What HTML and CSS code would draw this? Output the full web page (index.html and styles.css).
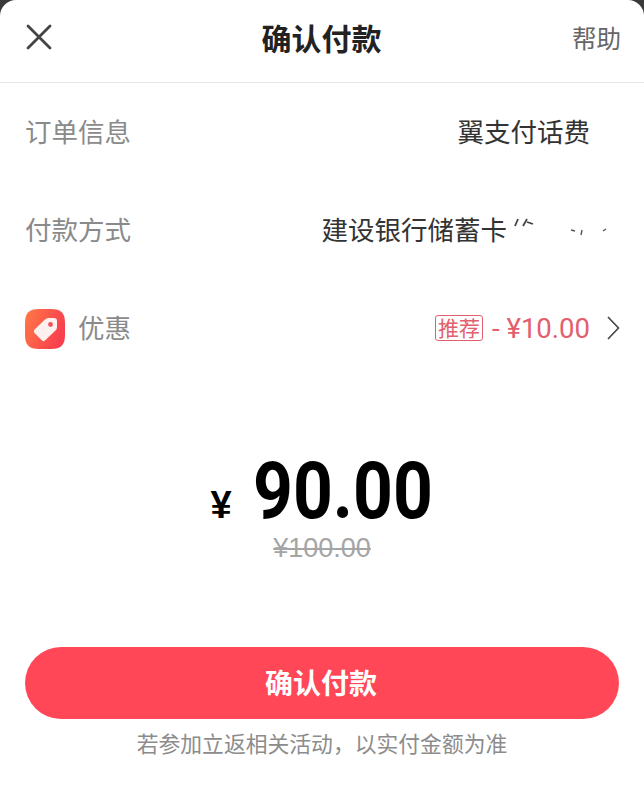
FILE: index.html
```html
<!DOCTYPE html>
<html lang="zh-CN">
<head>
    <meta charset="UTF-8">
    <meta name="viewport" content="width=device-width, initial-scale=1.0">
    <title>确认付款</title>
    <link rel="stylesheet" href="styles.css">
</head>
<body>
    <div class="sheet">
        <header class="topbar">
            <svg class="close-icon" width="26" height="26" viewBox="0 0 26 26">
                <path d="M2 2 L24 24 M24 2 L2 24" stroke="#444" stroke-width="2.8" stroke-linecap="round" fill="none"/>
            </svg>
            <h1 class="title">确认付款</h1>
            <span class="help">帮助</span>
        </header>

        <div class="info-row">
            <span class="label">订单信息</span>
            <span class="value value-order">翼支付话费</span>
        </div>
        <div class="info-row">
            <span class="label">付款方式</span>
            <span class="value value-card">建设银行储蓄卡
                <svg class="card-mask" width="98" height="26" viewBox="0 0 98 26">
                    <path d="M2 10 L5 3 M10 10 L14 3 M14 6 L20 8" stroke="#444" stroke-width="1.8" fill="none"/>
                    <path d="M58 14 L62 15 M69 14 L68 19 M90 15 L93 13" stroke="#555" stroke-width="1.4" fill="none"/>
                </svg>
            </span>
        </div>
        <div class="info-row">
            <div class="discount-left">
                <svg class="tag-icon" width="40" height="40" viewBox="0 0 40 40">
                    <defs>
                        <linearGradient id="tagBg" x1="0" y1="0" x2="1" y2="0.4">
                            <stop offset="0" stop-color="#ff7a45"/>
                            <stop offset="1" stop-color="#f9404f"/>
                        </linearGradient>
                    </defs>
                    <path d="M14 0 H26 C36 0 40 4 40 14 V26 C40 36 36 40 26 40 H14 C4 40 0 36 0 26 V14 C0 4 4 0 14 0 Z" fill="url(#tagBg)"/>
                    <path d="M9.5 20.5 L20 10.5 Q21.5 9 23.5 9 L29 9 Q32 9 32 12 L32 18 Q32 20 30.5 21.5 L20 31.5 Q18.5 33 17 31.5 L9.5 24 Q8 22 9.5 20.5 Z" fill="#fdf0ee"/>
                    <circle cx="25.5" cy="15.5" r="2.4" fill="#f4525a"/>
                </svg>
                <span class="label">优惠</span>
            </div>
            <div class="discount-right">
                <span class="badge">推荐</span>
                <span class="discount-amount">- ¥10.00</span>
                <svg class="chevron" width="14" height="26" viewBox="0 0 14 26">
                    <path d="M2 2 L12.5 13 L2 24" stroke="#444" stroke-width="1.6" fill="none"/>
                </svg>
            </div>
        </div>

        <section class="amount">
            <div class="price">
                <span class="currency">¥</span>
                <span class="number">90.00</span>
            </div>
            <div class="original">¥100.00</div>
        </section>

        <footer class="actions">
            <button class="pay-btn" type="button">确认付款</button>
            <p class="hint">若参加立返相关活动，以实付金额为准</p>
        </footer>
    </div>
</body>
</html>
```

FILE: styles.css
```css
* {
    box-sizing: border-box;
}
body {
    margin: 0;
    background-color: #3a3a3a;
    font-family: "Noto Sans CJK SC", "Liberation Sans", sans-serif;
}
.sheet {
    height: 800px;
    background-color: #fff;
    border-radius: 16px 16px 0 0;
    display: flex;
    flex-direction: column;
    overflow: hidden;
}
.topbar {
    height: 83px;
    padding: 0 23px 8px 26px;
    display: flex;
    justify-content: space-between;
    align-items: center;
    border-bottom: 1px solid #e8e8e8;
}
.close-icon {
    display: block;
}
.title {
    margin: 0 0 0 19px;
    font-size: 30px;
    font-weight: 700;
    color: #222;
}
.help {
    font-size: 24.5px;
    color: #666;
}
.info-row {
    height: 98px;
    padding: 0 24px 0 25px;
    display: flex;
    justify-content: space-between;
    align-items: center;
    flex-shrink: 0;
}
.label {
    font-size: 26.5px;
    line-height: 36px;
    margin-top: -2px;
    color: #8a8a8a;
}
.value {
    font-size: 26.5px;
    line-height: 36px;
    margin-top: -2px;
    color: #333;
    display: flex;
    align-items: center;
}
.value-order {
    margin-right: 30px;
}
.value-card {
    margin-right: 9px;
}
.card-mask {
    margin-left: 6px;
}
.discount-left {
    display: flex;
    align-items: center;
    gap: 13px;
}
.tag-icon {
    display: block;
    margin-top: 2px;
}
.discount-right {
    display: flex;
    align-items: center;
}
.badge {
    width: 48px;
    height: 26px;
    border: 1px solid #e2606e;
    border-radius: 3px;
    color: #e2606e;
    font-size: 21px;
    line-height: 23px;
    text-align: center;
    margin-right: 9px;
}
.discount-amount {
    font-family: "Roboto", "Liberation Sans", sans-serif;
    font-size: 27.5px;
    font-weight: 400;
    color: #e2606e;
    margin-right: 16px;
}
.chevron {
    display: block;
}
.amount {
    margin-top: 86px;
    display: flex;
    flex-direction: column;
    align-items: center;
}
.price {
    display: flex;
    align-items: baseline;
    gap: 21px;
    line-height: 56px;
    color: #000;
}
.currency {
    font-family: "Liberation Sans", sans-serif;
    font-size: 38px;
    font-weight: 700;
}
/* no condensed face installed, so the digits get squeezed to the width they need */
.number {
    font-family: "Roboto", "Liberation Sans", sans-serif;
    font-size: 80px;
    font-weight: 700;
    display: inline-block;
    transform: scaleX(0.87);
    transform-origin: left center;
    margin-right: -26px;
}
.original {
    font-family: "Liberation Sans", sans-serif;
    font-size: 27px;
    line-height: 30px;
    color: #a5a5a5;
    text-decoration: line-through;
}
.actions {
    margin-top: auto;
    padding: 0 25px 41px;
    display: flex;
    flex-direction: column;
    align-items: center;
}
.pay-btn {
    width: 100%;
    height: 72px;
    padding: 0 2px 2px 0;
    border: none;
    border-radius: 36px;
    background-color: #ff4757;
    color: #fff;
    font-family: inherit;
    font-size: 28px;
    font-weight: 700;
}
.hint {
    margin: 8px 0 0;
    font-size: 21.8px;
    line-height: 32px;
    color: #8c8c8c;
}
```
